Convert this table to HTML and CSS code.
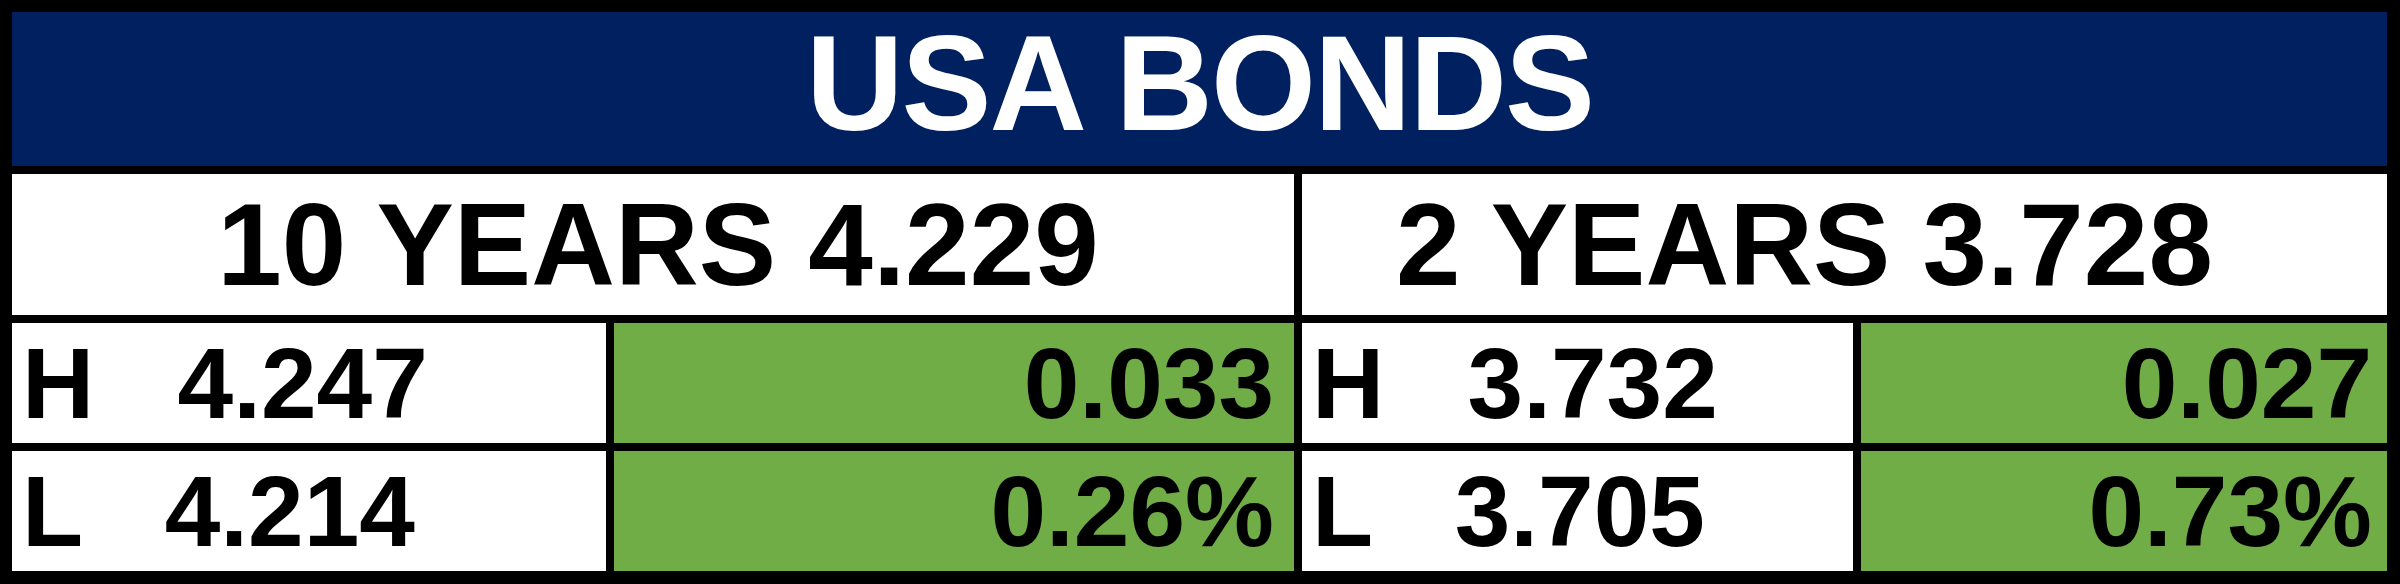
FILE: index.html
```html
<!DOCTYPE html>
<html lang="en">
<head>
<meta charset="utf-8">
<title>USA Bonds</title>
<link rel="stylesheet" href="styles.css">
</head>
<body>
<div class="board">
  <div class="title">USA BONDS</div>
  <div class="head head-left">10 YEARS 4.229</div>
  <div class="head head-right">2 YEARS 3.728</div>
  <div class="cell label">H   4.247</div>
  <div class="cell change">0.033</div>
  <div class="cell label">H   3.732</div>
  <div class="cell change change-right">0.027</div>
  <div class="cell label">L   4.214</div>
  <div class="cell change">0.26%</div>
  <div class="cell label">L   3.705</div>
  <div class="cell change change-right">0.73%</div>
</div>
</body>
</html>
```

FILE: styles.css
```css
html, body {
  margin: 0;
  padding: 0;
  background: #000;
}

body {
  width: 2400px;
  height: 584px;
  overflow: hidden;
  font-family: "Liberation Sans", Arial, sans-serif;
  font-weight: bold;
}

.board {
  box-sizing: border-box;
  width: 2400px;
  height: 584px;
  background: #000;
  padding: 12px 13px 13px 12px;
  display: grid;
  grid-template-columns: 594px 680px 551px 526px;
  grid-template-rows: 154px 141px 120px 120px;
  gap: 8px;
}

.title {
  grid-column: 1 / 5;
  background: #002060;
  color: #fff;
  font-size: 135px;
  display: flex;
  align-items: center;
  justify-content: center;
  padding-bottom: 12px;
  box-sizing: border-box;
  letter-spacing: -2px;
}

.head {
  background: #fff;
  color: #000;
  font-size: 116px;
  display: flex;
  align-items: center;
  justify-content: center;
  white-space: pre;
}

.head-left {
  grid-column: 1 / 3;
  padding-left: 10px;
}

.head-right {
  grid-column: 3 / 5;
  padding-right: 80px;
}

.cell {
  font-size: 100px;
  color: #000;
  display: flex;
  align-items: center;
  white-space: pre;
}

.label {
  background: #fff;
  padding-left: 10px;
}

.change {
  background: #70ad47;
  justify-content: flex-end;
  padding-right: 20px;
}

.change-right {
  padding-right: 15px;
}
```
